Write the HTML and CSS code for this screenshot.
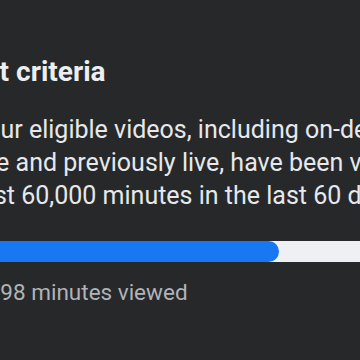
FILE: index.html
```html
<!DOCTYPE html>
<html lang="en">
<head>
<meta charset="utf-8">
<link rel="stylesheet" href="styles.css">
</head>
<body>
<section class="criteria">
  <h2 class="criteria-title">Engagement criteria</h2>
  <p class="criteria-text"><span class="line">Your eligible videos, including on-demand,</span><span class="line">live and previously live, have been viewed for at</span><span class="line line-last">least 60,000 minutes in the last 60 days.</span></p>
  <div class="progress"><div class="progress-fill" style="width: 327px"></div></div>
  <p class="progress-caption">46,998 minutes viewed</p>
</section>
</body>
</html>
```
FILE: styles.css
```css
html, body {
  margin: 0;
  padding: 0;
  width: 360px;
  height: 360px;
  overflow: hidden;
  background: #27282a;
}
.criteria {
  margin-left: -28px;
  padding-top: 55px;
  font-family: Roboto, "Noto Sans", sans-serif;
  width: 700px;
}
.criteria-title {
  margin: 0;
  font-size: 28px;
  line-height: 34px;
  font-weight: 700;
  color: #eceef1;
  text-indent: -121px;
  white-space: nowrap;
}
.criteria-text {
  margin: 24px 0 0;
  font-size: 25px;
  line-height: 33px;
  color: #e6e8ec;
  white-space: nowrap;
}
.line {
  display: block;
}
.line-last {
  margin-left: -11px;
}
.progress {
  margin-top: 29px;
  height: 21px;
  background: #eef0f3;
  margin-left: -20px;
}
.progress-fill {
  height: 100%;
  background: #1877f2;
  border-radius: 0 11px 11px 0;
}
.progress-caption {
  margin: 15px 0 0;
  font-size: 22.5px;
  line-height: 30px;
  color: #b0b3b8;
  text-indent: -14px;
  white-space: nowrap;
}
```
